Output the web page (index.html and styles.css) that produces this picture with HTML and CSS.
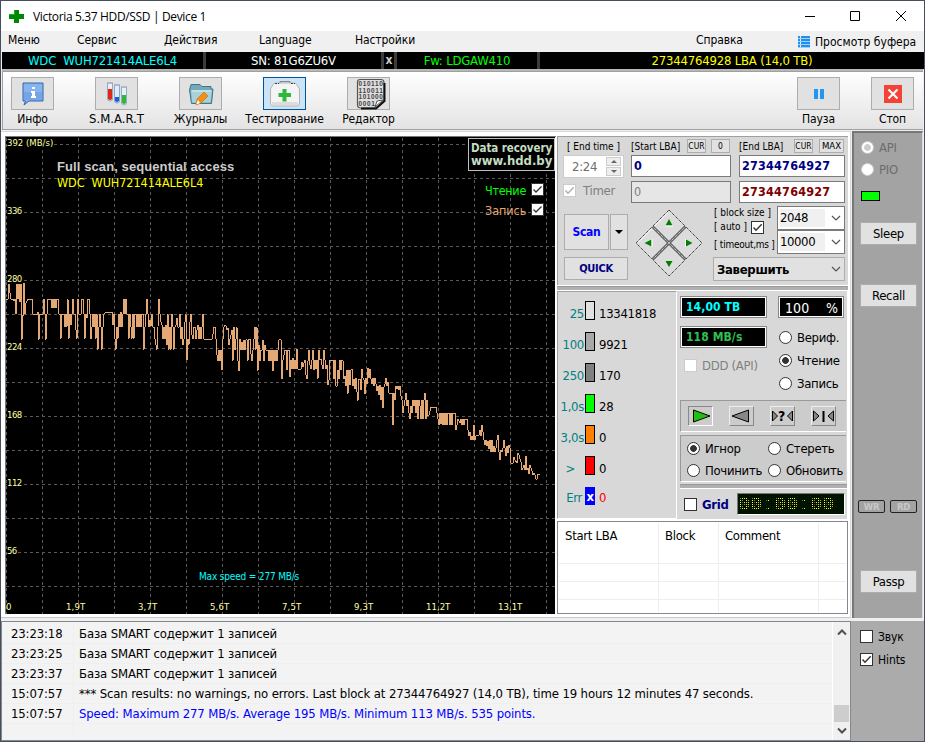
FILE: index.html
```html
<!DOCTYPE html>
<html lang="ru">

<head>
    <meta charset="UTF-8">
    <meta name="viewport" content="width=device-width, initial-scale=1.0">
    <title>Victoria 5.37 HDD/SSD</title>
    <link rel="stylesheet" href="styles.css">
</head>

<body>
    <!-- общие значки -->
    <svg class="defs" width="0" height="0">
        <symbol id="tick" viewBox="0 0 13 13"><path d="M2.5 6.5L5 9.2L10.7 3.2" fill="none" stroke="currentColor" stroke-width="1.4" /></symbol>
        <symbol id="chev" viewBox="0 0 10 10"><path d="M1 3L5 7L9 3" fill="none" stroke="#555" stroke-width="1.2" /></symbol>
    </svg>
    <div class="window">
        <div class="title">
            <svg class="logo" width="15" height="15"><path d="M5 1H10V5H15V10H10V14H5V10H0V5H5Z" fill="#008800" /><path d="M5.500 1V5.500H0" fill="none" stroke="#20b020" /></svg>
            <span class="name">Victoria 5.37 HDD/SSD | Device 1</span>
            <svg class="controls" width="102" height="12"><path d="M0 6.500H10M45.500 1.500H54.500V10.500H45.500ZM91 1L101 11M101 1L91 11" fill="none" stroke="#000" /></svg>
        </div>
        <div class="menu">
            <span>Меню</span><span>Сервис</span><span>Действия</span><span>Language</span><span>Настройки</span><span>Справка</span>
            <span class="buffer"><svg width="12" height="12"><path d="M0 1H2M0 4H2M0 7H2M0 10H2M3 1H12M3 4H12M3 7H12M3 10H12" stroke="#1e90f0" stroke-width="2" /><path d="M0 2.500H12M0 5.500H12M0 8.500H12M0 11.500H12" stroke="#9fd0fa" /></svg><span>Просмотр буфера</span></span>
        </div>
        <div class="info">
            <div class="model">WDC&nbsp; WUH721414ALE6L4</div>
            <div class="serial">SN: 81G6ZU6V</div>
            <div class="close">x</div>
            <div class="fw">Fw: LDGAW410</div>
            <div class="lba">27344764928 LBA (14,0 TB)</div>
        </div>
        <div class="toolbar">
            <div class="tool">
                <div class="face"><svg width="22" height="24"><path d="M1 1H21V19H7L2 23L3.500 19H1Z" fill="#85b4ef" stroke="#3465ac" /><path d="M2 10H20V18H2Z" fill="#75a5e6" /><path d="M10 5H13V7H10ZM9 9H13V14H14V16H9V14H10V11H9Z" fill="#fff" /></svg></div>
                <span>Инфо</span>
            </div>
            <div class="tool">
                <div class="face"><svg width="22" height="26"><path d="M1.500 2H6.500V18Q6.500 20 4 20T1.500 18Z" fill="#e8f0fa" stroke="#9aa8b8" /><path d="M2 8H6V18Q4 20 2 18Z" fill="#e02818" /><path d="M8.500 4H13.500V20Q13.500 22 11 22T8.500 20Z" fill="#dfeeff" stroke="#8aa8cc" /><path d="M9 16H13V20Q11 22 9 20Z" fill="#2060d0" /><path d="M15.500 6H20.500V22Q20.500 24 18 24T15.500 22Z" fill="#e4f0fa" stroke="#98acc0" /><path d="M16 14H20V22Q18 24 16 22Z" fill="#30b838" /><path d="M1 2H7M8 4H14M15 6H21" stroke="#a0a8b4" /></svg></div>
                <span class="smart">S.M.A.R.T</span>
            </div>
            <div class="tool">
                <div class="face"><svg width="26" height="24"><path d="M1.500 8L3 2.500H12L14 4.500H23V7H25L23.500 21.500H3.500Z" fill="#74a9b8" stroke="#3f7789" /><path d="M3 8H24L22.500 20.500H4Z" fill="#a9d1da" /><path d="M4 9H23" stroke="#d8f0f4" /><path d="M9 17L16 10L20 14L13 21L8 23Z" fill="#ef9119" stroke="#d57205" stroke-width=".7" /><path d="M8 22.500L10 18L12 21Z" fill="#fff" /></svg></div>
                <span>Журналы</span>
            </div>
            <div class="tool">
                <div class="face active"><svg width="32" height="28"><path d="M1.500 9L4 4.500Q5 3 7 3H25Q27 3 28 5L30.500 9V24Q30.500 26 28 26H4Q1.500 26 1.500 24Z" fill="#f4f4f4" stroke="#b4b4b4" /><path d="M3 22H29V25H3Z" fill="#dcdcdc" /><path d="M11 3V1.500H21V3" fill="none" stroke="#888" /><path d="M6 3.500H10M22 3.500H26" stroke="#444" stroke-dasharray="2 1" /><path d="M13.500 9H17.500V13H22V17H17.500V21.500H13.500V17H9.500V13H13.500Z" fill="#2db83d" /></svg></div>
                <span>Тестирование</span>
            </div>
            <div class="tool">
                <div class="face"><svg class="binary" width="31" height="33"><path d="M5 2.500H26Q29 2.500 29 6V24L21 31H6Q2.500 31 2.500 28V5Q2.500 2.500 5 2.500Z" fill="#dedede" stroke="#555" stroke-width="1.200" /><path d="M29.500 6V24L21 31.500H6" fill="none" stroke="#111" stroke-width="2" /><path d="M20 30L22 24L28 23Z" fill="#fff" stroke="#555" /><g><text x="3.500" y="9" textLength="24">010110</text><text x="3.500" y="15.500" textLength="24">110011</text><text x="3.500" y="22" textLength="24">101000</text><text x="3.500" y="28.500" textLength="16">0001</text></g></svg></div>
                <span>Редактор</span>
            </div>
            <div class="tool pause">
                <div class="face"><svg width="10" height="10"><path d="M0 0H4V10H0ZM6 0H10V10H6Z" fill="#2196f3" /></svg></div>
                <span>Пауза</span>
            </div>
            <div class="tool stop">
                <div class="face"><svg width="18" height="18"><path d="M0 0H18V18H0Z" fill="#f44336" /><path d="M4.500 4.500L13.500 13.500M13.500 4.500L4.500 13.500" stroke="#fff" stroke-width="2.200" /></svg></div>
                <span>Стоп</span>
            </div>
        </div>

        <div class="main">
            <div class="work">
                <div class="graph">
                    <svg width="549" height="477" viewBox="6 137 549 477">
                        <rect x="6" y="137" width="549" height="477" fill="#000" />
                        <path class="grid" d="M6 144.500H555M6 178.500H555M6 212.500H555M6 246.500H555M6 280.500H555M6 314.500H555M6 348.500H555M6 382.500H555M6 416.500H555M6 450.500H555M6 484.500H555M6 518.500H555M6 552.500H555M6 586.500H555" />
                        <path class="grid" d="M6.500 138V614M42.500 138V614M78.500 138V614M114.500 138V614M150.500 138V614M186.500 138V614M222.500 138V614M258.500 138V614M294.500 138V614M330.500 138V614M366.500 138V614M402.500 138V614M438.500 138V614M474.500 138V614M510.500 138V614M546.500 138V614" />
                        <!-- график скорости -->
                        <polyline class="speed" points="6,299 8,299 9,283 10,293 11,299 13,299 14,301 15,299 16,314 17,283 18,299 19,283 20,302 21,283 22,340 23,316 24,283 25,314 26,303 28,299 32,299 33,314 37,315 38,312 39,340 40,314 43,314 44,299 45,314 46,340 47,314
                        48,299 51,299 52,308 53,299 54,308 55,299 56,308 57,299 58,299 59,314 60,314 61,339 62,314 64,314 65,327 66,314 67,327 68,299 69,339 70,314 71,325 72,314 73,299 74,314 75,314 76,330 77,339 78,299 79,314 80,314 81,314 82,299 83,299 84,314 85,339 86,314 87,318 88,299 89,299 90,314 91,339 92,327
                        93,314 94,327 95,314 96,339 97,314 98,350 99,327 100,314 101,327 102,350 103,327 104,314 105,313 112,312 113,325 114,314 115,339 116,350 117,327 118,339 119,314 120,327 121,312 122,327 123,314 124,299 125,314 126,299 127,314 128,314 129,339 130,314 131,327 132,339 133,314 134,339 135,314 136,314
                        137,327 138,314 139,327 140,314 141,327 142,314 143,314 144,350 145,327 146,314 147,299 148,314 149,327 150,320 151,326 152,314 153,327 154,327 155,339 156,345 157,350 158,327 159,299 160,314 161,322 162,325 163,339 164,327 165,339 166,325 167,345 168,314 169,350 170,327 171,350 172,314 173,327
                        174,350 175,327 176,325 177,318 178,327 179,327 180,314 181,339 182,327 183,345 184,339 185,322 186,314 187,360 188,339 189,345 190,322 191,314 192,335 193,339 194,327 195,327 196,339 197,330 198,325 199,339 200,327 201,339 202,327 203,314 204,339 212,339 213,334 214,327 215,327 216,339 217,355
                        218,361 219,350 220,361 221,350 222,370 223,339 224,327 225,325 226,326 227,330 228,328 229,345 230,339 231,335 232,330 233,361 234,327 235,350 236,339 237,327 238,361 239,371 240,339 241,350 242,342 243,350 244,340 245,350 246,340 247,339 248,361 249,339 250,339 251,354 252,361 253,350 254,339
                        255,327 256,350 257,327 258,371 259,345 260,361 261,350 262,350 263,340 264,361 265,345 266,350 267,350 268,350 269,361 270,350 271,361 272,350 273,371 274,350 275,361 276,350 277,361 278,350 279,340 281,339 282,379 283,360 284,355 285,350 286,350 287,370 288,350 289,350 290,377 291,360 292,369
                        293,358 294,369 295,360 296,369 297,349 298,369 301,369 302,362 303,367 304,363 305,360 306,375 307,379 308,361 309,350 310,365 311,369 312,360 313,350 314,370 315,360 316,369 317,360 318,379 319,350 320,360 321,359 322,365 323,369 324,350 325,360 326,369 327,365 328,385 329,380 330,360 333,360
                        334,379 335,360 336,386 337,386 338,370 339,379 340,360 341,370 342,360 343,361 344,379 345,376 346,386 347,370 348,394 349,370 350,385 351,370 352,369 353,386 354,379 355,389 356,378 357,392 358,401 359,379 360,379 361,390 362,369 363,378 364,380 365,394 366,378 367,384 368,368 369,378 370,369
                        371,379 372,384 373,378 374,386 375,378 376,384 377,391 378,386 379,395 380,385 381,400 382,387 383,408 384,387 385,384 386,378 387,386 388,382 389,393 392,393 393,425 394,393 395,400 396,386 397,389 398,386 399,390 400,386 401,396 402,400 403,413 404,406 405,400 406,393 407,406 408,400 409,413
                        410,419 411,406 412,413 413,400 414,406 415,400 416,413 417,400 418,419 419,400 420,406 421,419 422,400 423,419 424,400 425,393 426,419 427,400 428,416 429,415 430,411 431,407 436,407 437,413 438,419 439,425 440,413 441,424 442,413 443,425 444,413 445,425 446,413 447,425 448,413 449,413 450,425
                        451,413 452,425 453,413 455,413 456,430 457,425 458,419 460,423 461,419 462,425 463,419 464,425 465,419 467,419 468,430 469,436 470,432 471,440 472,436 473,440 474,425 475,440 476,436 479,435 480,430 481,436 482,425 483,432 484,440 485,445 486,440 487,446 488,441 489,449 490,440 491,452 492,440
                        493,452 494,446 495,452 496,448 497,440 498,435 499,452 500,460 501,450 502,452 503,448 504,440 505,448 506,456 507,446 508,453 509,445 510,448 511,463 513,463 514,457 515,460 517,463 518,453 519,455 520,459 521,462 522,470 523,468 524,465 525,470 526,456 527,470 528,468 529,474 530,465 531,468
                        532,471 533,475 534,473 535,475 536,479 537,479 538,474 540,475" />
                        <g class="bg">
                            <rect x="7" y="138" width="46" height="10" /><rect x="7" y="206" width="16" height="10" /><rect x="7" y="274" width="16" height="10" /><rect x="7" y="342" width="16" height="10" /><rect x="7" y="410" width="16" height="10" /><rect x="7" y="478" width="16" height="10" /><rect x="7" y="546" width="11" height="10" />
                        </g>
                        <g class="axis">
                            <text x="7" y="146" textLength="46">392 (MB/s)</text>
                            <text x="7" y="214" textLength="15">336</text>
                            <text x="7" y="282" textLength="15">280</text>
                            <text x="7" y="350" textLength="15">224</text>
                            <text x="7" y="418" textLength="15">168</text>
                            <text x="7" y="486" textLength="15">112</text>
                            <text x="7" y="554" textLength="10">56</text>
                            <text x="6" y="610">0</text>
                            <text x="66" y="610" textLength="19">1,9T</text>
                            <text x="138" y="610" textLength="19">3,7T</text>
                            <text x="210" y="610" textLength="19">5,6T</text>
                            <text x="282" y="610" textLength="19">7,5T</text>
                            <text x="354" y="610" textLength="19">9,3T</text>
                            <text x="426" y="610" textLength="24">11,2T</text>
                            <text x="498" y="610" textLength="24">13,1T</text>
                        </g>
                        <text class="max" x="199" y="580" textLength="100">Max speed = 277 MB/s</text>
                        <text class="scan-name" x="57" y="171" textLength="177">Full scan, sequential access</text>
                        <text class="disk-name" x="57" y="187" textLength="146">WDC&#160; WUH721414ALE6L4</text>
                        <rect x="468.500" y="138.500" width="86" height="32" fill="#000" stroke="#c0c0c0" />
                        <text class="ad" x="471" y="151.500" font-size="11.500" textLength="81">Data recovery</text>
                        <text class="ad" x="471" y="165" font-size="13" textLength="81">www.hdd.by</text>
                        <text x="485" y="195" fill="#00ff00" font-size="12.500" textLength="41">Чтение</text>
                        <text x="485" y="215" fill="#e4a874" font-size="12.500" textLength="41">Запись</text>
                        <path d="M531.500 183.500h12v12h-12zM531.500 203.500h12v12h-12z" fill="#fff" stroke="#333" />
                        <path d="M533.500 189.500l2.500 2.500l5.500 -5.500M533.500 209.500l2.500 2.500l5.500 -5.500" fill="none" stroke="#333" stroke-width="1.300" />
                    </svg>
                </div>

                <div class="panel">
                    <div class="setup">
                        <div class="limits">
                            <div class="col time">
                                <div class="caption">[ End time ]</div>
                                <div class="clock"><span>2:24</span><i class="spin"><b></b><b class="down"></b></i></div>
                                <div class="timer"><i class="check off"><svg><use href="#tick" /></svg></i><span>Timer</span></div>
                            </div>
                            <div class="col start">
                                <div class="caption"><span>[Start LBA]</span><button>CUR</button><button>0</button></div>
                                <div class="field navy">0</div>
                                <div class="field gray">0</div>
                            </div>
                            <div class="col end">
                                <div class="caption"><span>[End LBA]</span><button>CUR</button><button class="max-btn">MAX</button></div>
                                <div class="field navy">27344764927</div>
                                <div class="field maroon">27344764927</div>
                            </div>
                        </div>
                        <div class="actions">
                            <div class="buttons">
                                <div class="split"><button class="scan">Scan</button><button class="arrow"></button></div>
                                <button class="quick">QUICK</button>
                            </div>
                            <svg class="cross" width="68" height="68">
                                <path d="M34 1L67 34L34 67L1 34Z" fill="#dcdcdc" stroke="#000" stroke-dasharray="1 1" />
                                <path d="M33 3.500L3 33.500M33 35.500L19 49.500M49 20L35 34" stroke="#fff" />
                                <path d="M17.500 17.500L50.500 50.500M50.500 17.500L17.500 50.500" stroke="#666" stroke-width="3" />
                                <path d="M17.500 17.500L50.500 50.500M50.500 17.500L17.500 50.500" stroke="#eee" stroke-dasharray="1 1" />
                                <path d="M34 10L37.500 16.500H30.500ZM34 58L37.500 52H30.500ZM9.500 34L16.500 30.500V37.500ZM57.500 34L51 30.500V37.500Z" fill="#008000" />
                                <path d="M30.500 17H38M17 30V38M50.500 30V38" stroke="#fff" />
                            </svg>
                            <div class="options">
                                <div class="pair">
                                    <div class="names"><span>[ block size ]</span><span class="auto">[ auto ] <i class="check"><svg><use href="#tick" /></svg></i></span><span class="timeout">[ timeout,ms ]</span></div>
                                    <div class="lists">
                                        <div class="select"><span>2048</span><svg><use href="#chev" /></svg></div>
                                        <div class="select"><span>10000</span><svg><use href="#chev" /></svg></div>
                                    </div>
                                </div>
                                <div class="finish"><span>Завершить</span><svg><use href="#chev" /></svg></div>
                            </div>
                        </div>
                    </div>
                    <div class="bar"></div>
                    <div class="state">
                        <div class="blocks">
                            <div class="row"><span>25</span><i class="c1"></i><b>13341818</b></div>
                            <div class="row"><span>100</span><i class="c2"></i><b>9921</b></div>
                            <div class="row"><span>250</span><i class="c3"></i><b>170</b></div>
                            <div class="row"><span>1,0s</span><i class="c4"></i><b>28</b></div>
                            <div class="row"><span>3,0s</span><i class="c5"></i><b>0</b></div>
                            <div class="row"><span class="gt">&gt;</span><i class="c6"></i><b>0</b></div>
                            <div class="row last"><span class="err">Err</span><i class="c7">x</i><b class="red">0</b></div>
                        </div>
                        <div class="mode">
                            <div class="gauges">
                                <div class="left">
                                    <div class="lcd aqua">14,00 TB</div>
                                    <div class="lcd green">118 MB/s</div>
                                    <div class="ddd"><i class="check off"></i><span>DDD (API)</span></div>
                                </div>
                                <div class="right">
                                    <div class="lcd percent"><span>100</span><span>%</span></div>
                                    <div class="opt"><i class="radio"></i><span>Вериф.</span></div>
                                    <div class="opt"><i class="radio on"></i><span>Чтение</span></div>
                                    <div class="opt"><i class="radio"></i><span>Запись</span></div>
                                </div>
                            </div>
                            <div class="player">
                                <button class="pressed"><svg width="23" height="18"><path d="M4.500 3V15L21 9Z" fill="#20c010" stroke="#000" /></svg></button>
                                <button><svg width="23" height="18"><path d="M18.500 3V15L2 9Z" fill="#888" stroke="#000" /></svg></button>
                                <button><svg width="23" height="18"><path d="M1.500 4V14L6.500 9ZM21.500 4V14L16.500 9Z" fill="#888" stroke="#000" /><text x="7" y="14" font-size="14" font-weight="bold">?</text></svg></button>
                                <button><svg width="23" height="18"><path d="M1.500 4V14L7 9ZM21.500 4V14L16 9Z" fill="#888" stroke="#000" /><path d="M11.500 4V15" stroke="#000" stroke-width="2" /></svg></button>
                            </div>
                            <div class="errors">
                                <div class="opt"><i class="radio on"></i><span>Игнор</span></div>
                                <div class="opt"><i class="radio"></i><span>Стереть</span></div>
                                <div class="opt"><i class="radio"></i><span>Починить</span></div>
                                <div class="opt"><i class="radio"></i><span>Обновить</span></div>
                            </div>
                            <div class="bar small"></div>
                            <div class="bottom">
                                <i class="check"></i><b>Grid</b>
                                <div class="led"><span>00:00:00</span></div>
                            </div>
                        </div>
                    </div>
                    <div class="defects">
                        <div class="cell head">Start LBA</div><div class="cell head">Block</div><div class="cell head">Comment</div><div class="cell head"></div>
                        <div class="cell"></div><div class="cell"></div><div class="cell"></div><div class="cell"></div>
                        <div class="cell"></div><div class="cell"></div><div class="cell"></div><div class="cell"></div>
                        <div class="cell"></div><div class="cell"></div><div class="cell"></div><div class="cell"></div>
                    </div>
                </div>
            </div>

            <div class="side">
                <div class="opt api"><i class="radio half"></i><span>API</span></div>
                <div class="opt"><i class="radio none"></i><span>PIO</span></div>
                <div class="lamp"></div>
                <button>Sleep</button>
                <button class="recall">Recall</button>
                <div class="lights"><span>WR</span><span>RD</span></div>
                <button>Passp</button>
            </div>
        </div>

        <div class="footer">
            <div class="log">
                <div class="lines">
                    <div class="line"><span>23:23:18</span><span>База SMART содержит 1 записей</span></div>
                    <div class="line"><span>23:23:25</span><span>База SMART содержит 1 записей</span></div>
                    <div class="line"><span>23:23:37</span><span>База SMART содержит 1 записей</span></div>
                    <div class="line"><span>15:07:57</span><span>*** Scan results: no warnings, no errors. Last block at 27344764927 (14,0 TB), time 19 hours 12 minutes 47 seconds.</span></div>
                    <div class="line"><span>15:07:57</span><span class="blue">Speed: Maximum 277 MB/s. Average 195 MB/s. Minimum 113 MB/s. 535 points.</span></div>
                    <div class="line"><span></span><span></span></div>
                </div>
                <div class="scroll">
                    <svg width="10" height="8"><path d="M1 6.500L5 2.500L9 6.500" fill="none" stroke="#505050" stroke-width="2" /></svg>
                    <div class="thumb"></div>
                    <svg width="10" height="8"><path d="M1 1.500L5 5.500L9 1.500" fill="none" stroke="#505050" stroke-width="2" /></svg>
                </div>
            </div>
            <div class="hints">
                <div class="opt"><i class="check"></i><span>Звук</span></div>
                <div class="opt"><i class="check"><svg><use href="#tick" /></svg></i><span>Hints</span></div>
            </div>
        </div>
    </div>
</body>

</html>
```

FILE: styles.css
```css
* {
    box-sizing: border-box;
}

body {
    margin: 0;
    font-family: 'DejaVu Sans Condensed', 'DejaVu Sans', sans-serif;
    font-stretch: condensed;
    font-size: 13px;
    letter-spacing: -0.3px;
    color: #000;
    white-space: nowrap;
}

.defs {
    position: absolute;
}

svg {
    display: block;
    flex: none;
}

button {
    font: inherit;
    letter-spacing: inherit;
    color: inherit;
    padding: 0;
    margin: 0;
    background: #e1e1e1;
    border: 1px solid #adadad;
}

i, b {
    font-style: normal;
}

.window {
    width: 925px;
    height: 742px;
    display: flex;
    flex-direction: column;
    background: #f0f0f0;
    border: 1px solid #45505c;
    overflow: hidden;
}

/* заголовок и меню */
.title {
    height: 30px;
    flex: none;
    display: flex;
    align-items: center;
    background: #fff;
    padding-left: 8px;
}

.name {
    font-family: 'Open Sans', 'Noto Sans', sans-serif;
    font-stretch: normal;
    font-size: 12px;
    letter-spacing: -0.35px;
    margin-left: 9px;
    flex: 1;
}

.controls {
    margin-right: 17px;
}

.menu {
    height: 21px;
    flex: none;
    display: grid;
    grid-template-columns: 69px 87px 95px 96px 341px 102px auto;
    padding-left: 7px;
    font-size: 12px;
    letter-spacing: -0.1px;
    line-height: 18px;
}

.buffer {
    display: flex;
    align-items: center;
    gap: 5px;
    height: 21px;
    letter-spacing: 0;
}

/* строка с данными диска */
.info {
    height: 17px;
    flex: none;
    display: grid;
    grid-template-columns: 204px 178px 13px 143px 1fr;
    background: #000;
    line-height: 17px;
    letter-spacing: -0.2px;
    text-align: center;
    margin-left: 1px;
}

.info div {
    border-right: 3px solid #3c3c3c;
}

.info .lba {
    border: none;
    color: #ffff00;
}

.model {
    color: #00ffff;
}

.serial {
    color: #fff;
}

.close {
    color: #ccc;
    font-size: 12px;
    font-weight: bold;
}

.fw {
    color: #00ff00;
}

/* панель инструментов */
.toolbar {
    height: 59px;
    flex: none;
    display: flex;
    margin: 2px 1px 0 1px;
    border: 1px solid #a0a0a0;
    border-right: none;
    background: linear-gradient(#fff, #e3e3e3);
    box-shadow: 0 -2px 0 #b8b8b8;
    padding: 5px 0 0 8px;
}

.tool {
    width: 43px;
    margin-right: 41px;
    display: flex;
    flex-direction: column;
    align-items: center;
}

.face {
    width: 43px;
    height: 33px;
    flex: none;
    display: flex;
    align-items: center;
    justify-content: center;
    border: 1px solid #adadad;
    background: #e1e1e1;
}

.active {
    background: #cce4f7;
    border-color: #005499;
}

.binary {
    margin-left: 3px;
    font-family: 'Liberation Sans', sans-serif;
    font-size: 6.5px;
    font-weight: bold;
    fill: #444;
}

.tool span {
    font-size: 12px;
    letter-spacing: -0.1px;
    line-height: 18px;
}

.tool .smart {
    font-size: 13px;
    letter-spacing: 0;
}

.pause {
    margin-left: auto;
    margin-right: 31px;
}

.stop {
    margin-right: 9px;
}

/* рабочая область */
.main {
    height: 487px;
    flex: none;
    display: flex;
    justify-content: space-between;
    margin-top: 1px;
}

.work {
    width: 850px;
    display: flex;
    background: #fff;
    border-top: 1px solid #d8d8d8;
    border-right: 1px solid #d8d8d8;
    border-bottom: 1px solid #c8c8c8;
    padding: 4px 2px 2px 4px;
}

.graph {
    width: 551px;
    flex: none;
    height: 478px;
    border-top: 1px solid #777;
    border-left: 1px solid #777;
}

.grid {
    fill: none;
    stroke: #5a5a5a;
    stroke-dasharray: 3 3;
}

.speed {
    fill: none;
    stroke: #e4a874;
    stroke-width: 1;
    shape-rendering: crispEdges;
}

.axis {
    fill: #ffffa0;
    font-size: 9.5px;
}

.max {
    fill: #00ffff;
    font-size: 10px;
}

.scan-name {
    fill: #ccc;
    font-family: 'Liberation Sans', sans-serif;
    font-size: 13px;
    font-weight: bold;
}

.disk-name {
    fill: #ffff00;
    font-size: 12.5px;
}

.ad {
    fill: #c4dcc0;
    font-weight: bold;
}

.panel {
    width: 291px;
    flex: none;
    display: flex;
    flex-direction: column;
    margin-left: 1px;
}

.setup {
    height: 149px;
    background: #d8d8d8;
    border-top: 1px solid #a0a0a0;
    border-left: 1px solid #a0a0a0;
    padding: 2px 2px 0 5px;
}

.limits {
    display: flex;
}

.col {
    height: 68px;
}

.time {
    width: 61px;
    margin-right: 7px;
}

.start {
    width: 100px;
    margin-right: 8px;
}

.end {
    width: 106px;
}

.caption {
    display: flex;
    height: 16px;
    line-height: 15px;
    font-size: 10px;
    letter-spacing: 0;
}

.time .caption {
    padding-left: 4px;
}

.caption span {
    flex: 1;
}

.caption button {
    width: 19px;
    height: 14px;
    font-size: 8.5px;
    line-height: 12px;
    margin-left: 4px;
    margin-right: 1px;
}

.caption .max-btn {
    width: 25px;
    font-size: 9.5px;
    margin-left: 5px;
}

.clock {
    height: 23px;
    background: #fff;
    border: 1px solid #ccc;
    display: flex;
    align-items: center;
    justify-content: space-between;
    padding: 0 2px 0 8px;
    color: #6d6d6d;
}

.spin {
    display: flex;
    flex-direction: column;
    gap: 1px;
}

.spin b {
    width: 15px;
    height: 9px;
    background: #eee;
    border: 1px solid #ccc;
    display: flex;
    align-items: center;
    justify-content: center;
}

.spin b::after {
    content: "";
    border: 3px solid transparent;
    border-top: none;
    border-bottom: 3px solid #666;
}

.spin .down::after {
    transform: scaleY(-1);
}

.timer {
    display: flex;
    align-items: center;
    gap: 7px;
    height: 15px;
    color: #808080;
    margin-top: 5px;
}

.check {
    width: 13px;
    height: 13px;
    flex: none;
    display: inline-block;
    background: #fff;
    border: 1px solid #333;
    color: #333;
}

.check svg {
    width: 13px;
    height: 13px;
    margin: -1px;
}

.off {
    border-color: #ccc;
    color: #b0b0b0;
}

.field {
    height: 22px;
    border: 1px solid #7a7a7a;
    background: #fff;
    font-size: 12.5px;
    font-weight: bold;
    line-height: 19px;
    padding-left: 2px;
    margin-bottom: 4px;
    letter-spacing: 0.2px;
}

.navy {
    color: #000080;
}

.gray {
    color: #808080;
    background: #e6e6e6;
    font-weight: normal;
}

.maroon {
    color: #800000;
}

.actions {
    display: flex;
}

.buttons {
    width: 64px;
    margin: 7px 0 0 1px;
}

.split {
    display: flex;
    gap: 1px;
    height: 36px;
    margin-bottom: 7px;
}

.scan {
    width: 45px;
    color: #0000ff;
    font-size: 12px;
    font-weight: bold;
}

.arrow {
    width: 18px;
    display: flex;
    align-items: center;
    justify-content: center;
}

.arrow::after {
    content: "";
    border: 4px solid transparent;
    border-top-color: #000;
    border-bottom: none;
}

.quick {
    width: 64px;
    height: 23px;
    color: #000080;
    font-weight: bold;
    font-size: 11px;
}

.cross {
    margin: 2px 0 0 7px;
}

.options {
    width: 132px;
    margin-left: 10px;
}

.pair {
    display: flex;
    justify-content: space-between;
    font-size: 10px;
    letter-spacing: 0;
}

.names {
    display: flex;
    flex-direction: column;
    line-height: 12px;
    padding-left: 1px;
}

.auto {
    display: flex;
    gap: 4px;
    line-height: 16px;
    height: 16px;
    align-items: center;
}

.timeout {
    margin-top: 4px;
    letter-spacing: -0.25px;
}

.lists {
    width: 68px;
    flex: none;
    margin-top: -1px;
}

.select {
    height: 24px;
    display: flex;
    align-items: center;
    justify-content: space-between;
    border: 1px solid #7a7a7a;
    background: #fff;
    font-size: 13px;
    letter-spacing: -0.4px;
    padding: 0 3px 0 2px;
}

.select span {
    width: 45px;
    height: 18px;
    background: #f0f0f0;
    line-height: 17px;
}

.select svg, .finish svg {
    width: 10px;
    height: 10px;
}

.finish {
    height: 24px;
    margin-top: 3px;
    border: 1px solid #adadad;
    background: #e1e1e1;
    display: flex;
    align-items: center;
    justify-content: space-between;
    padding: 0 3px;
    font-weight: bold;
}

.bar {
    height: 4px;
    flex: none;
    background: #b0b0b0;
    border-top: 1px solid #999;
    margin: 1px 0;
}

.state {
    height: 228px;
    display: flex;
    background: #d8d8d8;
    border-right: 1px solid #fff;
}

.blocks {
    width: 120px;
    border: 1px solid #a0a0a0;
    border-right-color: #fff;
    border-bottom-color: #fff;
    padding-top: 9px;
}

.row {
    height: 31px;
    display: flex;
}

.row span {
    width: 26px;
    text-align: right;
    line-height: 26px;
    margin-right: 1px;
    color: #008080;
}

.row .gt {
    padding-right: 9px;
}

.row .err {
    padding-right: 2px;
}

.row i {
    width: 10px;
    height: 19px;
    border: 1px solid #000;
}

.row b {
    font-weight: normal;
    line-height: 26px;
    margin-left: 4px;
}

.last b, .last span {
    line-height: 22px;
}

.row .red {
    color: #ff0000;
}

.c1 { background: #e0e0e0; }
.c2 { background: #a8a8a8; }
.c3 { background: #808080; }
.c4 { background: #00ff00; }
.c5 { background: #ff8000; }
.c6 { background: #ff0000; }

.row .c7 {
    height: 18px;
    background: #0000ff;
    border: none;
    color: #fff;
    font-weight: bold;
    line-height: 20px;
    text-align: center;
}

.mode {
    flex: 1;
    padding: 5px 0 0 3px;
}

.gauges {
    display: flex;
    height: 104px;
}

.left {
    width: 87px;
    margin-right: 11px;
}

.right {
    width: 66px;
}

.lcd {
    height: 22px;
    border: 1px solid #888;
    box-shadow: inset 0 0 0 1px #fff;
    background: #000;
    line-height: 20px;
    padding-left: 5px;
    font-weight: bold;
    font-size: 12px;
    letter-spacing: 0.1px;
    margin-bottom: 8px;
}

.aqua {
    color: #00ffff;
}

.green {
    color: #30c050;
}

.percent {
    display: flex;
    justify-content: space-between;
    color: #fff;
    font-weight: normal;
    font-size: 14px;
    padding: 1px 5px 0 6px;
    margin-bottom: 8px;
}

.ddd {
    display: flex;
    align-items: center;
    gap: 5px;
    height: 15px;
    padding-left: 4px;
    color: #808080;
    margin-top: 10px;
}

.opt {
    display: flex;
    align-items: center;
    gap: 5px;
    height: 23px;
}

.right .opt {
    padding-left: 1px;
}

.radio {
    width: 13px;
    height: 13px;
    flex: none;
    border: 1px solid #333;
    border-radius: 50%;
    background: #fff;
}

.on {
    background: radial-gradient(circle, #333 3px, #fff 3.7px);
}

.half {
    border-color: #ccc;
    background: radial-gradient(circle, #ccc 3px, #fff 3.7px);
}

.none {
    border-color: #ccc;
}

.player {
    width: 166px;
    height: 32px;
    border-top: 1px solid #999;
    border-left: 1px solid #999;
    border-bottom: 1px solid #fff;
    background: #ccc;
    display: flex;
    gap: 16px;
    padding: 5px 0 0 7px;
}

.player button {
    width: 25px;
    height: 20px;
    background: #ccc;
    border: 1px solid;
    border-color: #eee #888 #888 #eee;
}

.player .pressed {
    border-color: #888 #fff #fff #888;
}

.errors {
    width: 166px;
    height: 47px;
    margin-top: 3px;
    border-top: 1px solid #999;
    border-left: 1px solid #999;
    border-bottom: 1px solid #fff;
    background: #ccc;
    display: grid;
    grid-template-columns: 81px auto;
    grid-template-rows: 22px 22px;
    padding: 1px 0 0 6px;
}

.errors .opt {
    height: 22px;
}

.small {
    height: 5px;
    width: 167px;
    margin: 2px 0 0 0;
    border-bottom: 1px solid #fff;
}

.bottom {
    display: flex;
    align-items: center;
    height: 31px;
    padding-left: 4px;
    color: #000080;
}

.bottom b {
    width: 40px;
    padding-left: 5px;
}

.led {
    width: 108px;
    height: 22px;
    margin-top: -2px;
    position: relative;
    background: #001c00;
    border: 1px solid #777;
    border-right-color: #fff;
    border-bottom-color: #fff;
    color: #ffff00;
    font-family: 'Liberation Mono', monospace;
    font-size: 20px;
    font-weight: bold;
    letter-spacing: 0;
    line-height: 22px;
}

/* точки индикатора поверх цифр */
.led::after {
    content: "";
    position: absolute;
    inset: 0;
    background:
        repeating-linear-gradient(90deg, transparent 0 1px, #001000 1px 2px),
        repeating-linear-gradient(transparent 0 1px, #001000 1px 2px);
}

.defects {
    height: 93px;
    margin-top: 2px;
    display: grid;
    grid-template-columns: 100px 60px 100px auto;
    grid-template-rows: 41px 18px 18px 12px;
    border: 1px solid #828790;
    background: #fff;
    padding: 1px;
}

.cell {
    border-right: 1px solid #eee;
    border-bottom: 1px solid #eee;
}

.head {
    padding: 5px 0 0 6px;
}

.cell:nth-child(4n) {
    border-right: none;
}

.cell:nth-child(n+13) {
    border-bottom: none;
}

/* правая колонка */
.side {
    width: 71px;
    margin-right: 1px;
    background: #a3a3a3;
    border-top: 2px solid #777;
    border-left: 2px solid #777;
    border-right: 1px solid #ddd;
    display: flex;
    flex-direction: column;
    padding-left: 7px;
}

.side .opt {
    color: #6d6d6d;
    height: 22px;
}

.side .api {
    margin-top: 3px;
}

.lamp {
    width: 19px;
    height: 10px;
    margin: 11px 0 21px 0;
    background: #00ff00;
    border: 1px solid #000;
}

.side button {
    width: 57px;
    height: 23px;
    margin-left: -1px;
    flex: none;
}

.side .recall {
    margin-top: 39px;
}

.lights {
    display: flex;
    gap: 5px;
    margin: 193px 0 57px -3px;
}

.lights span {
    width: 27px;
    height: 13px;
    border: 1px solid #222;
    border-radius: 2px;
    color: #c8c8c8;
    font-weight: bold;
    font-size: 9.5px;
    line-height: 12px;
    text-align: center;
}

/* журнал */
.footer {
    height: 120px;
    flex: none;
    margin-top: 3px;
    display: flex;
}

.log {
    width: 850px;
    height: 120px;
    border: 1px solid #828790;
    background: #f3f3f3;
    display: flex;
    letter-spacing: -0.13px;
}

.lines {
    width: 830px;
    padding-top: 2px;
    overflow: hidden;
}

.line {
    height: 20px;
    display: flex;
    line-height: 19px;
    border-bottom: 1px solid #efefef;
}

.line span:first-child {
    width: 72px;
    padding-left: 9px;
    border-right: 1px solid #efefef;
}

.line span + span {
    padding-left: 5px;
}

.blue {
    color: #0000ff;
}

.scroll {
    width: 18px;
    border-left: 1px solid #fff;
    background: #f0f0f0;
    display: flex;
    flex-direction: column;
    align-items: center;
    padding: 6px 0 5px;
}

.thumb {
    width: 15px;
    height: 17px;
    background: #cdcdcd;
    margin: auto 0 5px 0;
}

.hints {
    flex: 1;
    background: #ababab;
    padding: 4px 0 0 9px;
    font-size: 12px;
    letter-spacing: -0.1px;
}
```
